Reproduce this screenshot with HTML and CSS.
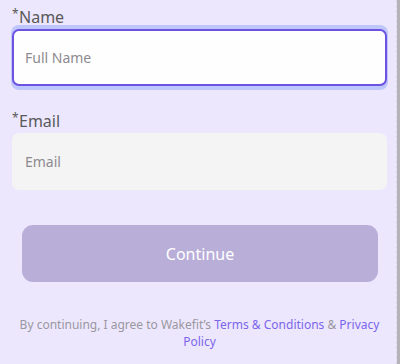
FILE: index.html
```html
<!DOCTYPE html>
<html lang="en">
<head>
<meta charset="utf-8">
<title>Details</title>
<link rel="stylesheet" href="styles.css">
</head>
<body>
<div class="page">
  <main class="form">
    <label class="field-label" for="name"><span class="req">*</span>Name</label>
    <input class="field field-focus" id="name" type="text" placeholder="Full Name">
    <label class="field-label field-label-gap" for="email"><span class="req">*</span>Email</label>
    <input class="field field-muted" id="email" type="email" placeholder="Email">
    <button class="continue" type="button">Continue</button>
    <p class="terms">By continuing, I agree to Wakefit’s <a href="#">Terms &amp; Conditions</a> &amp; <a href="#">Privacy Policy</a></p>
  </main>
  <div class="scrollbar"></div>
</div>
</body>
</html>
```
FILE: styles.css
```css
html, body {
  margin: 0;
  padding: 0;
  height: 100%;
}
body {
  background: #ede7fe;
  font-family: "Noto Sans", "Open Sans", sans-serif;
  overflow: hidden;
}
.page {
  display: flex;
  height: 364px;
}
.form {
  flex: 1;
  display: flex;
  flex-direction: column;
  padding: 6px 9px 0 12px;
  border-right: 1px dashed #dcd6ee;
}
.field-label {
  display: block;
  font-size: 16px;
  line-height: 22px;
  color: #595959;
  margin-bottom: 1px;
}
.field-label-gap {
  margin-top: 24px;
}
.req {
  display: inline-block;
  width: 6px;
  font-size: 12px;
  line-height: 0;
  vertical-align: 5px;
  margin-right: 1px;
}
.field {
  box-sizing: border-box;
  width: 100%;
  height: 57px;
  border-radius: 7px;
  padding: 0 11px;
  font-family: inherit;
  font-size: 14px;
  color: #333;
  outline: none;
}
.field::placeholder {
  color: #8d8b90;
}
.field-focus {
  background: #fefefe;
  border: 2px solid #6e53e3;
  box-shadow: 0 -3px 0 1px #bec7fb, 0 3px 0 1px #bec7fb;
}
.field-muted {
  background: #f4f4f4;
  border: 2px solid #f4f4f4;
}
.continue {
  margin: 35px 9px 0 10px;
  height: 57px;
  border: none;
  border-radius: 11px;
  background: #b8aed8;
  color: #ffffff;
  font-family: inherit;
  font-size: 16px;
}
.terms {
  margin: 34px 0 0 0;
  text-align: center;
  font-size: 12px;
  line-height: 17px;
  color: #9a979e;
}
.terms a {
  color: #7b66ea;
  text-decoration: none;
}
.scrollbar {
  width: 3px;
  background: #b5b3b8;
}
```
